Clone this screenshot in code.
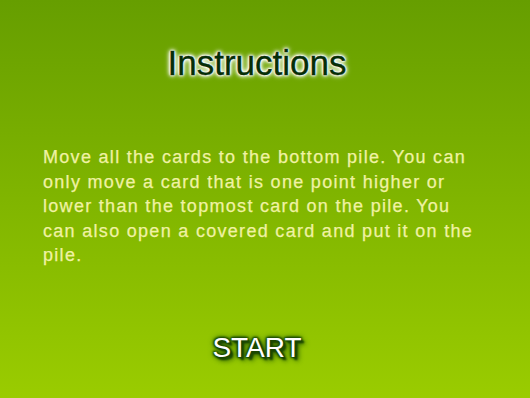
export default function App() {
  return (
    <div className="w-[530px] h-[398px] overflow-hidden bg-[linear-gradient(to_bottom,#669e00,#9acc00)] font-['Liberation_Sans',Arial,sans-serif] pr-[16px]">
      <div className="pt-[45px] text-center">
        <h1 className="text-[35px] leading-[35px] text-[#062e06] [-webkit-text-stroke:0.4px_#062e06] [text-shadow:0_0_1px_#fff,0_0_1px_#fff,0_0_2px_#fff,0_0_2px_#fff,0_0_3px_#fff,0_0_4px_#fff,0_0_5px_#fff,0_0_6px_#fff]">
          Instructions
        </h1>
      </div>
      <p className="mt-[65px] ml-[43px] w-[440px] text-[18px] leading-[24.5px] tracking-[1.3px] text-[#f0f2a4] [-webkit-text-stroke:0.25px_#f0f2a4]">
        Move all the cards to the bottom pile. You can only move a card that is one point higher or lower than the topmost card on the pile. You can also open a covered card and put it on the pile.
      </p>
      <div className="mt-[66px] text-center">
        <span className="text-[28px] leading-[28px] text-white [text-shadow:1px_1px_1px_#1a4600,2px_2px_2px_#1a4600,3px_3px_2px_#1a4600,-1px_-1px_2px_#1f5200,1px_-1px_2px_#1f5200,-1px_1px_2px_#1f5200,0_0_4px_#2a5c00,0_0_6px_#2a5c00,4px_4px_5px_#2a5c00]">
          START
        </span>
      </div>
    </div>
  );
}
